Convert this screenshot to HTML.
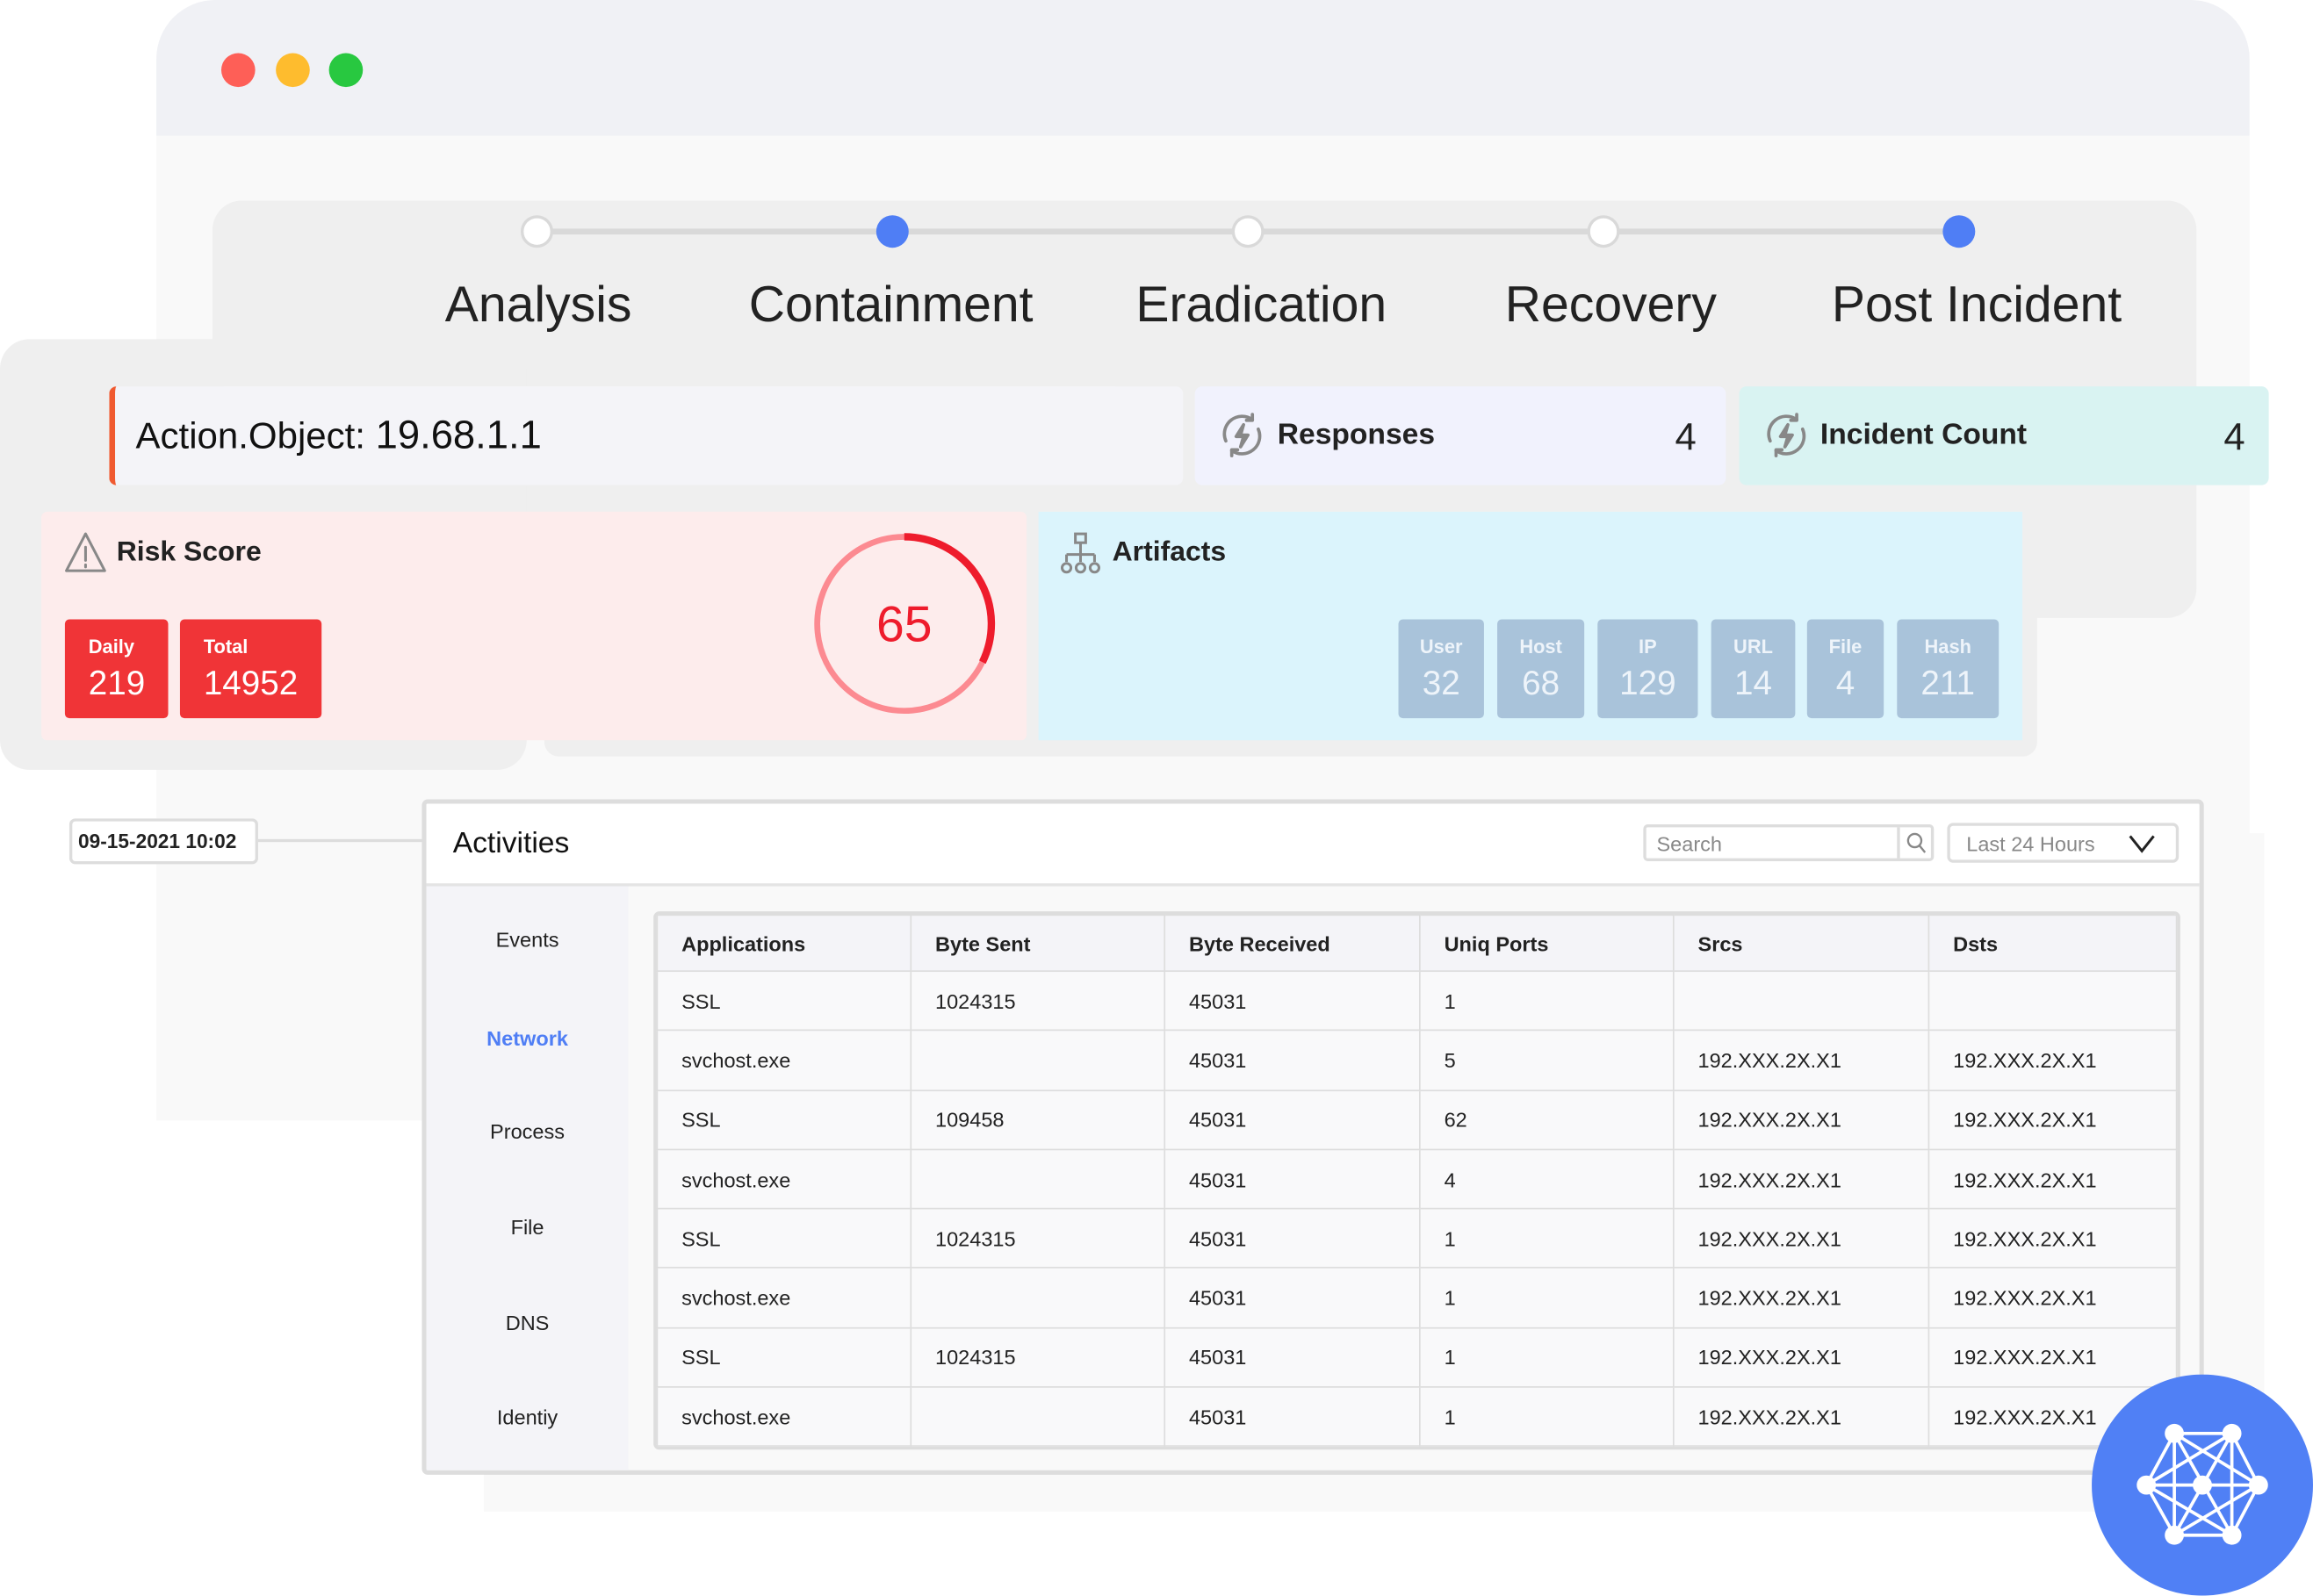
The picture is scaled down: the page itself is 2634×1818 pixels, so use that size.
<!DOCTYPE html>
<html><head><meta charset="utf-8"><style>
*{margin:0;padding:0;box-sizing:border-box}
html,body{width:2634px;height:1818px;background:#fff;overflow:hidden;font-family:"Liberation Sans",sans-serif;color:#222}
#s{position:absolute;left:0;top:0;width:1568px;height:1082px;transform:scale(1.67985);transform-origin:0 0}
.a{position:absolute}
.dot{position:absolute;width:22px;height:22px;border-radius:50%;top:146px}
.lbl{position:absolute;top:188px;font-size:34px;text-align:center;width:260px;color:#222}
.card{position:absolute;top:262px;height:67px;border-radius:5px}
.bx{position:absolute;top:420px;height:67px;border-radius:3px;color:#fff}
.bx .t{font-size:13px;font-weight:bold;margin-top:11px}
.bx .n{font-size:23px;margin-top:4px}
.art{background:#a9c3da;text-align:center;color:#eef4fa}
.risk{background:#f03437;padding-left:16px}
table{border-collapse:collapse;font-size:14px;width:100%}
td,th{border:1px solid #ddd;text-align:left;padding-left:16px;height:40.3px;font-weight:normal}
th{font-weight:bold;background:#f4f4f8;height:38px}
td{background:#f9f9fa}
.side div{position:absolute;width:137px;text-align:center;font-size:14px;color:#222}
</style></head><body><div id="s">
<div class="a" style="left:106px;top:0;width:1419px;height:760px;background:#f9f9f9;border-radius:40px 40px 0 0;overflow:hidden">
 <div style="height:92px;background:#f0f1f5"></div>
</div>
<div class="a" style="left:1360px;top:565px;width:175px;height:460px;background:#f9f9f9"></div>
<div class="a" style="left:328px;top:700px;width:1170px;height:325px;background:#f9f9f9"></div>
<div class="a" style="left:150px;top:36px;width:23px;height:23px;border-radius:50%;background:#fe5f57"></div>
<div class="a" style="left:187px;top:36px;width:23px;height:23px;border-radius:50%;background:#febc2e"></div>
<div class="a" style="left:223px;top:36px;width:23px;height:23px;border-radius:50%;background:#28c840"></div>
<div class="a" style="left:144px;top:136px;width:1345px;height:283px;background:#efefef;border-radius:20px"></div>
<div class="a" style="left:0;top:230px;width:357px;height:292px;background:#efefef;border-radius:20px"></div>
<div class="a" style="left:369px;top:400px;width:1012px;height:113px;background:#efefef;border-radius:0 0 10px 10px"></div>
<div class="a" style="left:364px;top:155px;width:964px;height:4px;background:#d9d9d9"></div>
<div class="dot" style="left:353px;background:#fff;border:2px solid #d9d9d9"></div>
<div class="dot" style="left:594px;background:#4f7ef5"></div>
<div class="dot" style="left:835px;background:#fff;border:2px solid #d9d9d9"></div>
<div class="dot" style="left:1076px;background:#fff;border:2px solid #d9d9d9"></div>
<div class="dot" style="left:1317px;background:#4f7ef5"></div>
<div class="lbl" style="left:235px">Analysis</div>
<div class="lbl" style="left:474px">Containment</div>
<div class="lbl" style="left:725px">Eradication</div>
<div class="lbl" style="left:962px">Recovery</div>
<div class="lbl" style="left:1210px">Post Incident</div>
<div class="card" style="left:74px;width:728px;background:#f4f4f8;border-left:4px solid #f05a30">
 <div style="position:absolute;left:14px;top:18px;font-size:25px;color:#111">Action.Object: <span style="font-size:27px">19.68.1.1</span></div>
</div>
<div class="card" style="left:810px;width:360px;background:#f1f2fd">
 <svg class="a" style="left:16px;top:17px" width="32" height="32" viewBox="0 0 32 32" fill="none" stroke="#888" stroke-width="2.2" stroke-linecap="round" stroke-linejoin="round"><path d="M23 5.5A12 12 0 0 0 5 20"/><path d="M9 26.5A12 12 0 0 0 27 12"/><path d="M23 2v4h-4"/><path d="M9 30v-4h4"/><path d="M17 9l-5 8h5l-2 7 5-8h-5z"/></svg>
 <div class="a" style="left:56px;top:22px;font-size:20px;font-weight:bold">Responses</div>
 <div class="a" style="right:20px;top:19px;font-size:26px">4</div>
</div>
<div class="card" style="left:1179px;width:359px;background:#d9f3f2">
 <svg class="a" style="left:16px;top:17px" width="32" height="32" viewBox="0 0 32 32" fill="none" stroke="#888" stroke-width="2.2" stroke-linecap="round" stroke-linejoin="round"><path d="M23 5.5A12 12 0 0 0 5 20"/><path d="M9 26.5A12 12 0 0 0 27 12"/><path d="M23 2v4h-4"/><path d="M9 30v-4h4"/><path d="M17 9l-5 8h5l-2 7 5-8h-5z"/></svg>
 <div class="a" style="left:55px;top:22px;font-size:20px;font-weight:bold">Incident Count</div>
 <div class="a" style="right:16px;top:19px;font-size:26px">4</div>
</div>
<div class="a" style="left:28px;top:347px;width:668px;height:155px;background:#fdecec;border-radius:4px">
 <svg class="a" style="left:15px;top:13px" width="30" height="30" viewBox="0 0 30 30" fill="none" stroke="#888" stroke-width="1.8" stroke-linejoin="round"><path d="M15 2L2 27h26z"/><path d="M15 11v9M15 23v1.5" stroke-linecap="round"/></svg>
 <div class="a" style="left:51px;top:17px;font-size:19px;font-weight:bold">Risk Score</div>
 <div class="bx risk" style="left:16px;top:73px;width:70px"><div class="t">Daily</div><div class="n">219</div></div>
 <div class="bx risk" style="left:94px;top:73px;width:96px"><div class="t">Total</div><div class="n">14952</div></div>
 <svg class="a" style="left:522px;top:13px" width="126" height="126" viewBox="0 0 126 126"><circle cx="63" cy="63" r="59" fill="none" stroke="#fc8a91" stroke-width="4"/><path d="M63 4A59 59 0 0 1 116 89" fill="none" stroke="#ee1c2c" stroke-width="5"/><text x="63" y="75" text-anchor="middle" font-family="Liberation Sans" font-size="34" fill="#ee1c2c">65</text></svg>
</div>
<div class="a" style="left:704px;top:347px;width:667px;height:155px;background:#dbf4fc">
 <svg class="a" style="left:14px;top:13px" width="30" height="30" viewBox="0 0 30 30" fill="none" stroke="#888" stroke-width="1.8"><rect x="11" y="2" width="7" height="6"/><path d="M14.5 8v8M5 16h19M5 16v5M14.5 16v5M24 16v5"/><circle cx="5" cy="25" r="3"/><circle cx="14.5" cy="25" r="3"/><circle cx="24" cy="25" r="3"/></svg>
 <div class="a" style="left:50px;top:17px;font-size:19px;font-weight:bold">Artifacts</div>
</div>
<div class="bx art" style="left:948px;width:58px"><div class="t">User</div><div class="n">32</div></div>
<div class="bx art" style="left:1015px;width:59px"><div class="t">Host</div><div class="n">68</div></div>
<div class="bx art" style="left:1083px;width:68px"><div class="t">IP</div><div class="n">129</div></div>
<div class="bx art" style="left:1160px;width:57px"><div class="t">URL</div><div class="n">14</div></div>
<div class="bx art" style="left:1225px;width:52px"><div class="t">File</div><div class="n">4</div></div>
<div class="bx art" style="left:1286px;width:69px"><div class="t">Hash</div><div class="n">211</div></div>
<div class="a" style="left:47px;top:555px;width:128px;height:31px;border:2px solid #ddd;border-radius:4px;background:#fff;font-size:13.5px;font-weight:bold;padding:6px 0 0 4px">09-15-2021 10:02</div>
<div class="a" style="left:175px;top:569px;width:112px;height:2px;background:#ddd"></div>
<div class="a" style="left:286px;top:542px;width:1208px;height:458px;border:3px solid #ddd;border-radius:4px;background:#f9f9f9;overflow:hidden">
 <div style="height:56px;background:#fff;border-bottom:2px solid #e4e4e4;position:relative">
  <div class="a" style="left:18px;top:16px;font-size:20px;color:#111">Activities</div>
  <div class="a" style="left:825px;top:14px;width:197px;height:25px;border:2px solid #ddd;border-radius:3px;background:#fff">
   <div class="a" style="left:7px;top:3px;font-size:14px;color:#888">Search</div>
   <div class="a" style="left:170px;top:0;width:2px;height:21px;background:#ddd"></div>
   <svg class="a" style="left:176px;top:3px" width="14" height="15" viewBox="0 0 14 15" fill="none" stroke="#888" stroke-width="1.4"><circle cx="6" cy="6" r="4.5"/><path d="M9.3 9.5L13 14"/></svg>
  </div>
  <div class="a" style="left:1031px;top:13px;width:157px;height:27px;border:2px solid #ddd;border-radius:4px;background:#fff">
   <div class="a" style="left:11px;top:4px;font-size:14px;color:#888">Last 24 Hours</div>
   <svg class="a" style="left:120px;top:5px" width="20" height="14" viewBox="0 0 20 14" fill="none" stroke="#222" stroke-width="1.8"><path d="M2 2l8 10 8-10"/></svg>
  </div>
 </div>
 <div class="side" style="position:absolute;left:0;top:56px;width:137px;height:400px;background:#f4f4f8">
  <div style="top:28px">Events</div>
  <div style="top:95px;color:#4f7ef5;font-weight:bold">Network</div>
  <div style="top:158px">Process</div>
  <div style="top:223px">File</div>
  <div style="top:288px">DNS</div>
  <div style="top:352px">Identiy</div>
 </div>
 <div class="a" style="left:154px;top:73px;width:1035px;border:2px solid #ddd;border-radius:4px;overflow:hidden">
 <table>
 <colgroup><col style="width:172px"><col style="width:172px"><col style="width:173px"><col style="width:172px"><col style="width:173px"><col></colgroup>
 <tr><th>Applications</th><th>Byte Sent</th><th>Byte Received</th><th>Uniq Ports</th><th>Srcs</th><th>Dsts</th></tr>
 <tr><td>SSL</td><td>1024315</td><td>45031</td><td>1</td><td></td><td></td></tr>
 <tr><td>svchost.exe</td><td></td><td>45031</td><td>5</td><td>192.XXX.2X.X1</td><td>192.XXX.2X.X1</td></tr>
 <tr><td>SSL</td><td>109458</td><td>45031</td><td>62</td><td>192.XXX.2X.X1</td><td>192.XXX.2X.X1</td></tr>
 <tr><td>svchost.exe</td><td></td><td>45031</td><td>4</td><td>192.XXX.2X.X1</td><td>192.XXX.2X.X1</td></tr>
 <tr><td>SSL</td><td>1024315</td><td>45031</td><td>1</td><td>192.XXX.2X.X1</td><td>192.XXX.2X.X1</td></tr>
 <tr><td>svchost.exe</td><td></td><td>45031</td><td>1</td><td>192.XXX.2X.X1</td><td>192.XXX.2X.X1</td></tr>
 <tr><td>SSL</td><td>1024315</td><td>45031</td><td>1</td><td>192.XXX.2X.X1</td><td>192.XXX.2X.X1</td></tr>
 <tr><td>svchost.exe</td><td></td><td>45031</td><td>1</td><td>192.XXX.2X.X1</td><td>192.XXX.2X.X1</td></tr>
 </table>
 </div>
</div>
<svg class="a" style="left:1418px;top:932px" width="150" height="150" viewBox="0 0 150 150">
 <circle cx="75" cy="75" r="75" fill="#5080f5"/>
 <g stroke="#fff" stroke-width="2.2" fill="none">
  <path d="M56 40H95M56 109H95M37 75H113M56 40V109M95 40V109M56 40L37 75L56 109M95 40L113 75L95 109M56 40L113 75M95 40L37 75M56 109L113 75M95 109L37 75M56 40L95 109M95 40L56 109"/>
 </g>
 <g fill="#fff"><circle cx="56" cy="40" r="6.5"/><circle cx="95" cy="40" r="6.5"/><circle cx="37" cy="75" r="6.5"/><circle cx="75" cy="75" r="6.5"/><circle cx="113" cy="75" r="6.5"/><circle cx="56" cy="109" r="6.5"/><circle cx="95" cy="109" r="6.5"/></g>
</svg>
</div></body></html>
